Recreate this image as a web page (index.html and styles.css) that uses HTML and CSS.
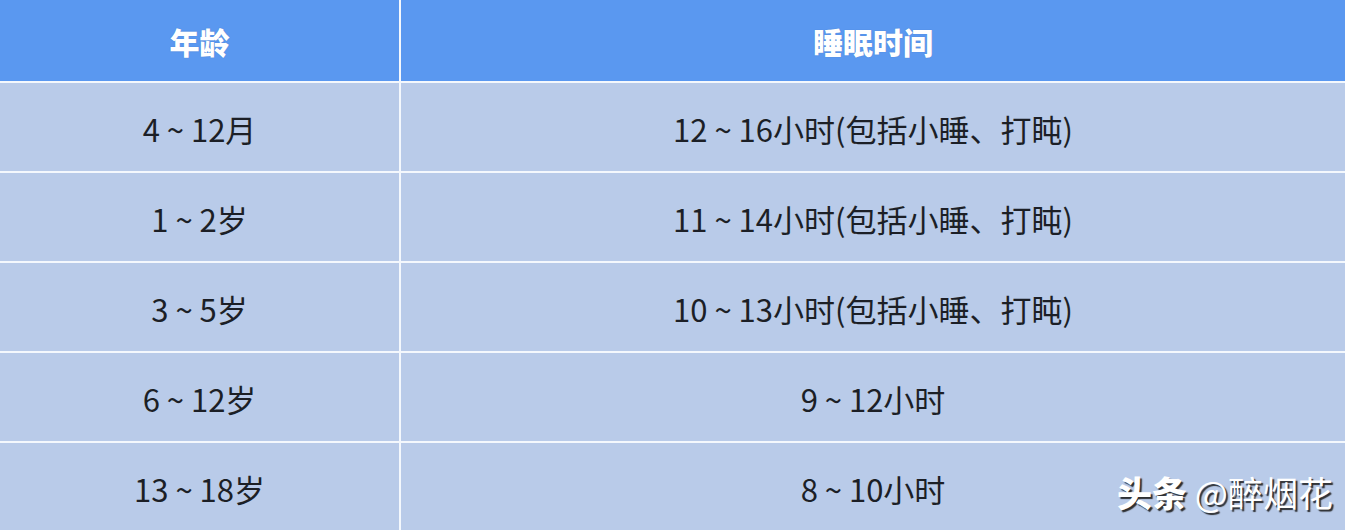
FILE: index.html
```html
<!DOCTYPE html>
<html lang="zh-CN">
<head>
<meta charset="utf-8">
<title>睡眠时间</title>
<link rel="stylesheet" href="styles.css">
</head>
<body>
<div class="page">
  <div class="table">
    <div class="cell head">年龄</div>
    <div class="cell head">睡眠时间</div>
    <div class="cell">4 ~ 12月</div>
    <div class="cell">12 ~ 16小时(包括小睡、打盹)</div>
    <div class="cell">1 ~ 2岁</div>
    <div class="cell">11 ~ 14小时(包括小睡、打盹)</div>
    <div class="cell">3 ~ 5岁</div>
    <div class="cell">10 ~ 13小时(包括小睡、打盹)</div>
    <div class="cell">6 ~ 12岁</div>
    <div class="cell">9 ~ 12小时</div>
    <div class="cell">13 ~ 18岁</div>
    <div class="cell">8 ~ 10小时</div>
  </div>
  <div class="watermark"><b>头条</b> @醉烟花</div>
</div>
</body>
</html>
```
FILE: styles.css
```css
html, body {
  margin: 0;
  padding: 0;
  background: #ffffff;
}
.page {
  position: relative;
  width: 1350px;
  height: 530px;
  overflow: hidden;
}
.table {
  width: 1345px;
  display: grid;
  grid-template-columns: 399px 944px;
  grid-template-rows: 81px repeat(5, 88px);
  gap: 2px;
  background: #f4f8fd;
  font-family: "Noto Sans CJK SC", "Noto Sans", sans-serif;
}
.cell {
  display: flex;
  align-items: center;
  justify-content: center;
  background: #b9cbe9;
  color: #1c1f26;
  font-size: 31px;
  padding-top: 2px;
  box-sizing: border-box;
}
.head {
  background: #5a98f0;
  color: #ffffff;
  font-weight: 900;
  font-size: 30px;
  padding-top: 0;
  text-shadow: 0 0 1px rgba(40, 70, 130, 0.4);
}
.watermark {
  position: absolute;
  left: 1117px;
  top: 466px;
  font-family: "Noto Sans CJK SC", "Noto Sans", sans-serif;
  font-size: 35px;
  color: #ffffff;
  white-space: nowrap;
  text-shadow: 2px 2px 1px rgba(30, 30, 30, 0.9);
}
.watermark b {
  font-weight: 900;
}
```
